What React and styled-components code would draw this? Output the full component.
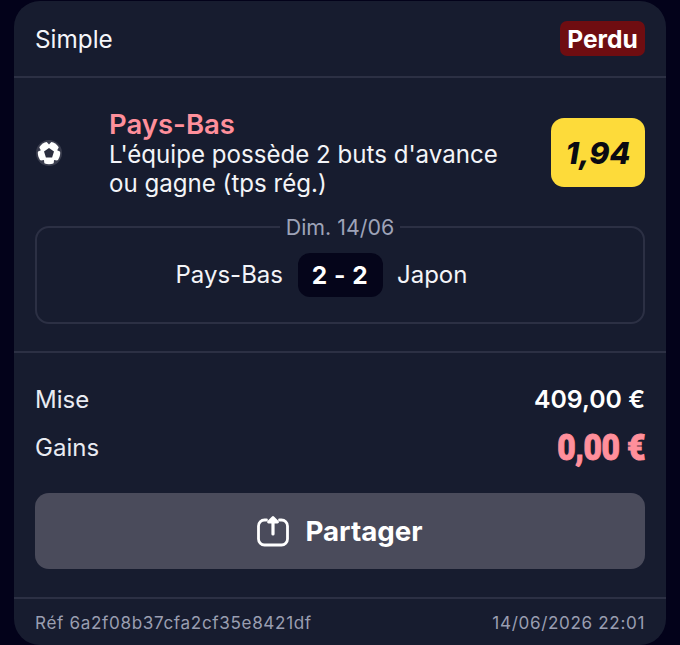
import React from "react";
import styled, { createGlobalStyle } from "styled-components";

const Global = createGlobalStyle`
  html, body { margin: 0; padding: 0; background: #03021a; }
  body { font-family: Inter, "Liberation Sans", sans-serif; overflow: hidden; }
  * { box-sizing: border-box; }
`;
const Page = styled.div`
  width: 680px; height: 645px; padding: 1px 14px 0; overflow: hidden; background: #03021a;
`;
const Card = styled.div`
  width: 652px; height: 644px; background: #171c2f; border-radius: 26px;
  display: flex; flex-direction: column; color: #fff;
`;
const Header = styled.div`
  height: 77px; flex: none; padding: 0 21px; display: flex; align-items: center; justify-content: space-between;
  border-bottom: 2px solid #2c3044;
`;
const Kind = styled.span`font-size: 24.3px; line-height: 28px; color: #f5f6fa;`;
const Badge = styled.span`
  height: 35px; width: 85px; background: #6f0d11; border-radius: 7px; display: flex; align-items: center; justify-content: center;
  font-size: 24.6px; font-weight: 700; color: #fff;
`;
const Selection = styled.div`
  height: 275px; flex: none; padding: 0 21px; border-bottom: 2px solid #2c3044;
  display: flex; flex-direction: column;
`;
const Pick = styled.div`
  display: flex; align-items: center; height: 148px; padding-top: 1px; flex: none;
`;
const Ball = styled.svg`width: 26px; height: 26px; flex: none; margin-left: 1px;`;
const PickText = styled.div`width: 442px; margin-left: 47px; padding-top: 1px; flex: none;`;
const Team = styled.div`font-size: 27.5px; font-weight: 600; line-height: 32px; color: #ff8f9b;`;
const Market = styled.div`font-size: 24.1px; line-height: 29px; color: #f3f4f8;`;
const Odds = styled.div`
  width: 94px; height: 69px; flex: none; background: #fddb3a; border-radius: 13px; display: flex; align-items: center; justify-content: center;
  font-size: 30.5px; font-weight: 800; font-style: italic; color: #0a0a12;
`;
const Match = styled.fieldset`
  margin: -11px 0 0; padding: 14px 0 0; height: 109px; border: 2px solid #2c3044; border-radius: 14px;
  display: grid; grid-template-columns: 1fr 85px 1fr; align-items: start; column-gap: 14.5px;
`;
const DateLabel = styled.legend`
  margin: 0 auto; padding: 0 6px; font-size: 21.4px; line-height: 24px; color: #9ea3b8;
`;
const Side = styled.span`
  font-size: 24px; line-height: 44px; color: #f3f4f8;
  justify-self: ${(p) => (p.$home ? "end" : "start")};
`;
const Score = styled.span`
  height: 44px; border-radius: 12px; background: #05051a; display: flex; align-items: center; justify-content: center;
  font-size: 24.5px; font-weight: 700; color: #fff; letter-spacing: 0.5px;
`;
const Money = styled.div`
  padding: 22px 21px 0; display: flex; flex-direction: column; flex: none; height: 246px; border-bottom: 2px solid #2c3044;
`;
const Row = styled.div`
  height: 48.5px; flex: none; display: flex; align-items: center; justify-content: space-between;
`;
const Label = styled.span`font-size: 24px; color: #e9ebf2;`;
const Stake = styled.span`font-size: 24.8px; font-weight: 600; color: #fff;`;
const Won = styled.span`
  font-family: Roboto, "Liberation Sans", sans-serif; font-size: 37px; font-weight: 900; color: #ff8f9b;
  display: inline-block; transform: scaleX(0.86); transform-origin: right center; letter-spacing: -0.5px;
  -webkit-text-stroke: 1px #ff8f9b;
`;
const Share = styled.button`
  margin-top: 21px; height: 76px; flex: none; width: 100%; border: 0; border-radius: 14px; background: #4a4b5b; color: #fff;
  display: flex; align-items: center; justify-content: center; gap: 16px;
  font-family: inherit; font-size: 27.7px; font-weight: 700;
`;
const ShareIcon = styled.svg`width: 32px; height: 31px; flex: none;`;
const Footer = styled.div`
  flex: 1; padding: 0 21px 0; display: flex; align-items: center; justify-content: space-between;
  font-size: 17.1px; color: #9a9eb1; letter-spacing: 0.65px;
`;

const notches = [0, 72, 144, 216, 288];

export default function App() {
  return (
    <Page>
      <Global />
      <Card>
        <Header>
          <Kind>Simple</Kind>
          <Badge>Perdu</Badge>
        </Header>
        <Selection>
          <Pick>
            <Ball viewBox="0 0 26 26">
              <circle cx="13" cy="13" r="13" fill="#3a3d4e" />
              <circle cx="13" cy="13" r="11.2" fill="#fff" />
              <path d="M13 8 L18 11.6 L16.1 17.4 L9.9 17.4 L8 11.6 Z" fill="#2b2e3f" />
              {notches.map((a) => (
                <path key={a} d="M13 4.4 L9.8 1 H16.200 Z" fill="#3a3d4e" transform={`rotate(${a} 13 13)`} />
              ))}
            </Ball>
            <PickText>
              <Team>Pays-Bas</Team>
              <Market>L'équipe possède 2 buts d'avance<br />ou gagne (tps rég.)</Market>
            </PickText>
            <Odds>1,94</Odds>
          </Pick>
          <Match>
            <DateLabel>Dim. 14/06</DateLabel>
            <Side $home>Pays-Bas</Side>
            <Score>2 - 2</Score>
            <Side>Japon</Side>
          </Match>
        </Selection>
        <Money>
          <Row><Label>Mise</Label><Stake>409,00 €</Stake></Row>
          <Row><Label>Gains</Label><Won>0,00 €</Won></Row>
          <Share>
            <ShareIcon viewBox="0 0 32 31" fill="none" stroke="#fff" strokeWidth="2.8" strokeLinecap="round" strokeLinejoin="round">
              <path d="M9.500 4 H7.500 A6 6 0 0 0 1.500 10 V23 A6 6 0 0 0 7.500 29 H24.500 A6 6 0 0 0 30.500 23 V10 A6 6 0 0 0 24.500 4 H22.500" />
              <path d="M16 18 V4" strokeWidth="3.2" />
              <path d="M11.500 6 L16 1.500 L20.500 6 Z" fill="#fff" />
            </ShareIcon>
            Partager
          </Share>
        </Money>
        <Footer>
          <span>Réf 6a2f08b37cfa2cf35e8421df</span>
          <span>14/06/2026 22:01</span>
        </Footer>
      </Card>
    </Page>
  );
}
